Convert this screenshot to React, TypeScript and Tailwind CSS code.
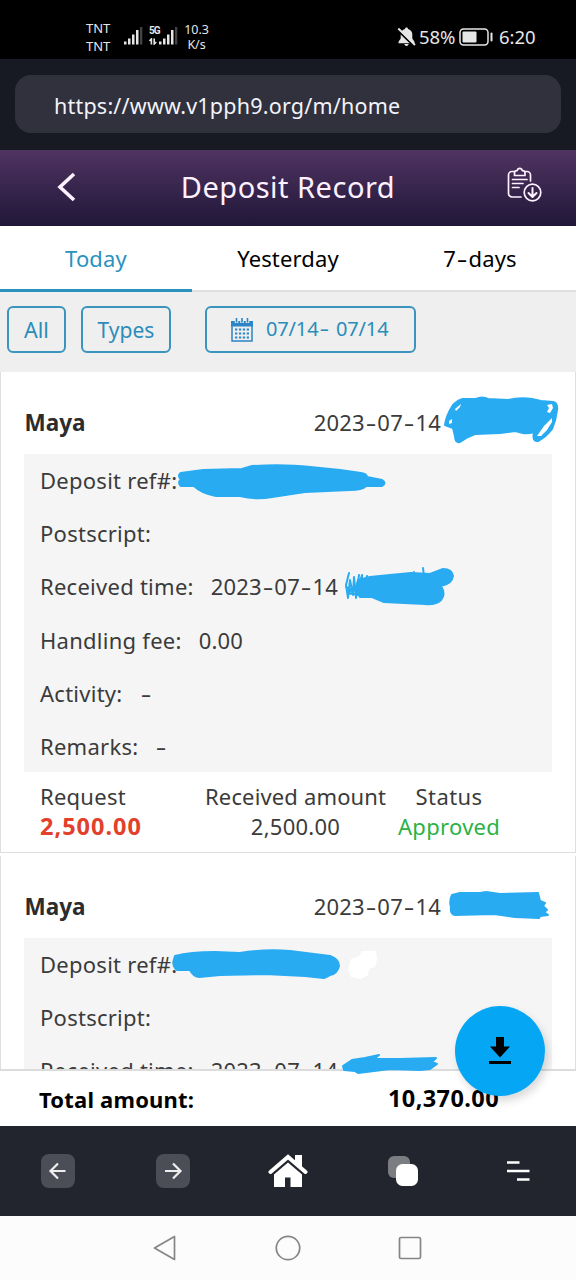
import React, { useState } from 'react';

const tabs = ['Today', 'Yesterday', '7-days'];

const records = [
  {
    id: 1,
    name: 'Maya',
    date: '2023-07-14',
    rows: [
      { label: 'Deposit ref#:' },
      { label: 'Postscript:' },
      { label: 'Received time:', value: '2023-07-14' },
      { label: 'Handling fee:', value: '0.00' },
      { label: 'Activity:', value: '-' },
      { label: 'Remarks:', value: '-' }
    ],
    summary: { request: '2,500.00', amount: '2,500.00', status: 'Approved' }
  },
  {
    id: 2,
    name: 'Maya',
    date: '2023-07-14',
    rows: [
      { label: 'Deposit ref#:' },
      { label: 'Postscript:' },
      { label: 'Received time:', value: '2023-07-14' }
    ]
  }
];

const Signal = () => (
  <svg width="19" height="18" viewBox="0 0 19 18" fill="#e6e6e6">
    <rect x="0" y="14.5" width="2.5" height="3" />
    <rect x="4" y="11.5" width="2.5" height="6" />
    <rect x="8" y="7.5" width="2.5" height="10" />
    <rect x="12" y="3" width="2.5" height="14.5" />
    <rect x="16" y="0" width="2.3" height="17.5" fill="#444" />
  </svg>
);

const StatusBar = () => (
  <div className="flex h-[59px] bg-black text-[#e6e6e6]">
    <div className="mt-[20px] ml-[86px] w-[38px] text-[13px] leading-[17.5px]">
      <div>TNT</div>
      <div>TNT</div>
    </div>
    <div className="mt-[27px]">
      <Signal />
    </div>
    <div className="mt-[26px] ml-[6px] flex w-[10px] flex-col">
      <span className="font-['Roboto'] text-[10px] leading-[10px] font-bold tracking-[-1px]">5G</span>
      <svg width="8" height="7" viewBox="0 0 8 7" className="mt-[2px]" fill="none" stroke="#e6e6e6" strokeWidth="1.6">
        <path d="M2.4 6.5V1L0.5 3M5.2 0.5V6L7.2 4" />
      </svg>
    </div>
    <div className="mt-[27px]">
      <Signal />
    </div>
    <div className="mt-[22px] ml-[5px] w-[27px] text-center text-[12.5px] leading-[15px] tracking-[-0.1px] whitespace-nowrap">
      <div>10.3</div>
      <div>K/s</div>
    </div>
    <div className="mt-[28px] mr-[40px] ml-auto flex h-[18px] items-center self-start">
      <svg width="19" height="20" viewBox="0 0 19 20" fill="#e6e6e6" className="-mt-px">
        <path d="M9.5 0.5c1 0 1.4.6 1.5 1.4 2.6.7 4.300 2.700 4.300 5.300v4.300l2.200 3.200v1.500h-16v-1.500l2.200-3.200V7.200c0-2.600 1.700-4.600 4.300-5.300C8.100 1.100 8.500.5 9.500.5zM7.300 17h4.400c-.4 1.300-1.200 2-2.200 2s-1.800-.7-2.200-2z" />
        <path d="M0 2.500 17 19" stroke="#000" strokeWidth="2" />
        <path d="M1.300 1.500 18 18" stroke="#e6e6e6" strokeWidth="1.900" />
      </svg>
      <span className="ml-[3px] w-[37px] text-[18.500px] tracking-[-0.100px]">58%</span>
      <svg width="35" height="18" viewBox="0 0 35 18" className="ml-[3px]">
        <rect x="1" y="1" width="28" height="16" rx="3.500" fill="none" stroke="#e6e6e6" strokeWidth="1.500" />
        <rect x="3.500" y="3.500" width="14" height="11" rx="1" fill="#e6e6e6" />
        <rect x="31.500" y="4.500" width="2" height="9" rx="1" fill="#e6e6e6" />
      </svg>
      <span className="ml-[5px] w-[37px] text-[18.500px]">6:20</span>
    </div>
  </div>
);

/* The dashes are drawn wider than the font's own hyphen */
const Dashed = ({ text }: { text: string }) => (
  <span className="whitespace-nowrap">
    {text.split(/(-)/).map((part, i) =>
      part === '-' ? (
        <span key={i} className="inline-block w-[12.5px] scale-x-150 text-center">
          -
        </span>
      ) : (
        <span key={i}>{part}</span>
      )
    )}
  </span>
);

const Row = ({ label, value }: { label: string; value?: string }) => (
  <div className="flex h-[53.3px] items-center pb-px pl-4">
    <span className="tracking-[0.26px]">{label}</span>
    {value && (
      <span className="ml-[17px] tracking-[0.2px]">
        <Dashed text={value} />
      </span>
    )}
  </div>
);

const Record = ({ record }: { record: (typeof records)[number] }) => (
  <div className="h-[481px] shrink-0 border-x border-b border-[#dedede] bg-white text-[22px] text-[#3b3b3b]">
    <div className="flex h-[82px] items-center justify-between pt-[19px] pr-[134px] pl-[23.5px]">
      <span className="pt-px text-[22.5px] font-bold text-[#2c2c2c]">{record.name}</span>
      <span className="tracking-[0.2px]">
        <Dashed text={record.date} />
      </span>
    </div>
    <div className="mr-[23px] ml-[23px] h-[318px] bg-[#f5f5f5]">
      {record.rows.map((row) => (
        <Row key={row.label} label={row.label} value={row.value} />
      ))}
    </div>
    {record.summary && (
      <div className="flex pt-[9px] pl-[39px] leading-[30px]">
        <div className="w-[165px]">
          <div className="tracking-[0.25px]">Request</div>
          <div className="text-[23.5px] font-bold tracking-[1px] text-[#e2402a]">{record.summary.request}</div>
        </div>
        <div className="w-[181px] text-center whitespace-nowrap">
          <div className="tracking-[0.15px]">Received amount</div>
          <div className="tracking-[0.25px]">{record.summary.amount}</div>
        </div>
        <div className="ml-[12px] w-[102px] text-center">
          <div className="tracking-[0.4px]">Status</div>
          <div className="tracking-[0.3px] text-[#2bb246]">{record.summary.status}</div>
        </div>
      </div>
    )}
  </div>
);

/* Marker strokes hiding the private values */
const Scribbles = () => (
  <svg
    className="pointer-events-none absolute top-0 left-0 z-10"
    width="576"
    height="708"
    viewBox="0 372 576 708"
    fill="#29abf2"
    stroke="#29abf2"
    strokeWidth="2"
    strokeLinejoin="round"
    strokeLinecap="round"
  >
    <path d="M445 425Q446 416 453 405 458 400 463 399L476 399Q482 396 488 399L508 400Q520 397 532 399L541 401 553 402Q558 403 557 410 556 420 552 429 546 437 538 441 532 442 534 432 528 434 523 433L515 431 500 433 475 434 468 437 460 442Q455 443 455 436L453 428Z" />
    <path fill="#fff" stroke="none" d="M449 421 452 419 452 423 449 424ZM455 409 461 404 460 407 456 411ZM547 405 552 404 553 408 550 413 547 412 549 408ZM537 436 544 426 552 418 552 422 547 430 541 436Z" />
    <path d="M181 473 203 470 242 469 252 466Q285 464 310 467L340 470 361 473Q367 474 367 477L382 480Q387 483 382 486L366 486Q362 490 350 490L305 492 272 497Q256 500 240 496L216 496Q201 493 194 486L181 486Q177 482 181 480Q177 475 181 473Z" />
    <path d="M370 577 390 575 411 573 430 574 443 569Q452 569 453 576 452 584 441 586 446 594 441 600 436 605 425 604L384 602 372 597 360 597 355 590 358 580Z" />
    <path fill="none" strokeWidth="2" d="M349 573 346 585 348 598 350 580 353 595 354 577 356 598 359 575 357 592 362 575 362 597 367 576 366 597 371 577M346 587 352 590 348 593 360 595M423 568 424 576M414 572 413 576" />
    <path d="M452 895 460 893 480 893 486 892 500 894 538 893 540 901 545 903 543 906 547 910 544 912 548 915 540 916 539 918 515 917 494 914 455 915Q450 914 451 907 449 901 452 895Z" />
    <path d="M175 956Q190 952 215 952L240 953Q265 949 290 951L330 956Q339 959 339 966 337 974 330 975L324 978 305 976 265 974 220 975 199 977Q193 976 190 970L177 970Q171 966 175 956Z" />
    <path fill="#fff" stroke="none" d="M351 959 359 956 362 951 376 951 377 960 375 967 369 969 368 975 361 979 351 977 348 969Z" />
    <path d="M343 1066 352 1060 365 1058 379 1055 374 1059 400 1059 436 1058 432 1062 437 1064 430 1069 420 1070 390 1069 358 1073 355 1071 344 1070Z" />
  </svg>
);

const App = () => {
  const [activeTab, setActiveTab] = useState('Today');

  return (
    <div className="flex h-[1280px] w-[576px] flex-col overflow-hidden bg-white font-['Noto_Sans',sans-serif]">
      <StatusBar />

      {/* Address bar */}
      <div className="h-[91px] bg-[#171a23] px-[15px] pt-4">
        <div className="flex h-[58px] items-center rounded-2xl bg-[#30313c] pt-[4px] pl-[39px] text-[21.5px] tracking-[0.21px] text-[#f3f3fa]">
          https://www.v1pph9.org/m/home
        </div>
      </div>

      {/* Header */}
      <div className="flex h-[76px] items-center justify-between bg-linear-to-b from-[#503462] to-[#211738] pr-[34px] pl-[57px] text-[#fdf0ff]">
        <svg width="20" height="30" viewBox="0 0 20 30" fill="none" stroke="currentColor" strokeWidth="3.6" className="-mt-[3px]">
          <path d="M17 2 3 15 17 28" />
        </svg>
        <h1 className="-mt-[3px] mr-[8px] text-[29px] tracking-[0.5px]">Deposit Record</h1>
        <svg width="35" height="36" viewBox="0 0 35 36" fill="none" stroke="currentColor" strokeWidth="1.7" strokeLinecap="round" strokeLinejoin="round" className="-mt-[7px]">
          <path d="M14 30H5a3.500 3.500 0 0 1-3.500-3.500V8A3.500 3.500 0 0 1 5 4.500h2M18.500 4.500H20A3.500 3.500 0 0 1 23.500 8v6" />
          <path d="M7.500 8.500V6c0-1.500 1-2.300 2.500-2.300C10.500 2 11.400 1.300 12.700 1.300s2.300.7 2.700 2.400c1.500 0 2.600.8 2.600 2.300v2.500z" />
          <path d="M5.500 12.500H20M5.500 16.500H16M5.500 20.500H12" />
          <circle cx="25.500" cy="25.500" r="8.300" />
          <path d="M25.500 21v8.500M21.500 26l4 4 4-4" strokeWidth="2" />
        </svg>
      </div>

      {/* Tabs */}
      <div className="flex h-[66px] text-[22px] tracking-[0.15px] text-black">
        {tabs.map((tab) => (
          <button
            key={tab}
            onClick={() => setActiveTab(tab)}
            className={
              tab === activeTab
                ? 'flex-1 border-b-[3px] border-[#2b92be] pt-[2px] text-[#2b92be]'
                : 'flex-1 border-b-2 border-[#dfdfdf] pt-px'
            }
          >
            <Dashed text={tab} />
          </button>
        ))}
      </div>

      {/* Filters */}
      <div className="flex h-[80px] bg-[#efefef] pt-[14px] pl-[7px] text-[21.5px] text-[#2b8cba]">
        <button className="h-[47px] w-[59px] rounded-md border-2 border-[#3a94bd] pt-[2px]">All</button>
        <button className="ml-[15px] h-[47px] w-[90px] rounded-md border-2 border-[#3a94bd] pt-[2px] text-[21px]">Types</button>
        <button className="ml-[34px] flex h-[47px] w-[211px] items-center rounded-md border-2 border-[#3a94bd] pl-[24px] text-[20px]">
          <svg width="22" height="24" viewBox="0 0 22 24" fill="#2b85c6">
            <path d="M0 3h22v5.500H0z" />
            <path d="M1 8v15h20V8" fill="none" stroke="#2b85c6" strokeWidth="1.500" />
            <path d="M5.500 0v5M11 0v5M16.500 0v5" stroke="#efefef" strokeWidth="3.500" />
            <path d="M5.500 0v4.500M11 0v4.500M16.500 0v4.500" stroke="#2b85c6" strokeWidth="1.600" />
            <path d="M4 11.500h14M4 15.500h14M4 19.500h14" stroke="#2b85c6" strokeWidth="2.200" strokeDasharray="2.300 1.600" />
          </svg>
          <span className="-mt-[2px] ml-[13px] tracking-[-0.15px]">
            <Dashed text="07/14- 07/14" />
          </span>
        </button>
      </div>

      {/* Records */}
      <div className="relative h-[697px] shrink-0">
        <div className="flex h-full flex-col gap-[3px] overflow-hidden">
          {records.map((record) => (
            <Record key={record.id} record={record} />
          ))}
        </div>
        <Scribbles />
      </div>

      {/* Total */}
      <div className="relative flex h-[57px] shrink-0 items-center justify-between border-t-2 border-[#dcdcdc] bg-white pt-px pr-[77px] pl-[39px] text-[22px] font-bold text-black">
        <span className="tracking-[0.2px]">Total amount:</span>
        <span className="text-[23.5px] tracking-[0.4px]">10,370.00</span>
        <button className="absolute -top-[65px] right-[31px] z-20 flex h-[90px] w-[90px] items-center justify-center rounded-full bg-[#05a7f5] shadow-[3px_5px_8px_rgba(0,0,0,0.15)]">
          <svg width="24" height="28" viewBox="0 0 24 28" fill="#000">
            <path d="M8 0h8v9.500h6L12 20.500 2 9.500h6zM1 24h22v3H1z" />
          </svg>
        </button>
      </div>

      {/* Browser toolbar */}
      <div className="flex h-[90px] shrink-0 items-center bg-[#22252e]">
        <div className="flex flex-1 justify-center">
          <svg width="34" height="34" viewBox="0 0 34 34">
            <rect width="34" height="34" rx="8" fill="#4b4e56" />
            <path d="M24.500 17H9.500M17 9.500 9.500 17l7.500 7.500" fill="none" stroke="#eee" strokeWidth="2.200" />
          </svg>
        </div>
        <div className="flex flex-1 justify-center">
          <svg width="34" height="34" viewBox="0 0 34 34">
            <rect width="34" height="34" rx="8" fill="#4b4e56" />
            <path d="M9 17h15.500M17 9.500l7.500 7.500-7.500 7.500" fill="none" stroke="#eee" strokeWidth="2.200" />
          </svg>
        </div>
        <div className="flex flex-1 justify-center">
          <svg width="40" height="34" viewBox="0 0 40 34" fill="#fff">
            <path d="M27 1h7v14l-7-6zM6 19 20 7l14 12v14H22.500V23.500h-5.500V33H6z" />
            <path d="M3 20 20 5.500 37 20" fill="none" stroke="#22252e" strokeWidth="4.500" />
            <path d="M2.500 18 20 3 37.500 18" fill="none" stroke="#fff" strokeWidth="4" strokeLinecap="round" />
          </svg>
        </div>
        <div className="flex flex-1 justify-center">
          <svg width="30" height="30" viewBox="0 0 30 30">
            <rect width="22" height="22" rx="6" fill="#7c7d82" />
            <rect x="8" y="8" width="22" height="22" rx="6.500" fill="#fff" />
          </svg>
        </div>
        <div className="flex flex-1 justify-center">
          <svg width="24" height="20" viewBox="0 0 24 20" stroke="#fff" strokeWidth="2.500">
            <path d="M1 1.500h12.500M1 10h22.500M11 18.500h12.500" />
          </svg>
        </div>
      </div>

      {/* System navigation */}
      <div className="flex h-[64px] shrink-0 items-center bg-[#fcfcfc] pl-[153px]">
        <svg width="23" height="26" viewBox="0 0 23 26" fill="none" stroke="#858585" strokeWidth="1.700" strokeLinejoin="round">
          <path d="M1.500 13 21.500 1.500v23z" />
        </svg>
        <svg width="26" height="26" viewBox="0 0 26 26" fill="none" stroke="#858585" strokeWidth="1.700" className="ml-[99px]">
          <circle cx="13" cy="13" r="11.700" />
        </svg>
        <svg width="24" height="24" viewBox="0 0 24 24" fill="none" stroke="#858585" strokeWidth="1.700" className="ml-[97px]">
          <rect x="1.500" y="1.500" width="21" height="21" rx="1.500" />
        </svg>
      </div>
    </div>
  );
};

export default App;
